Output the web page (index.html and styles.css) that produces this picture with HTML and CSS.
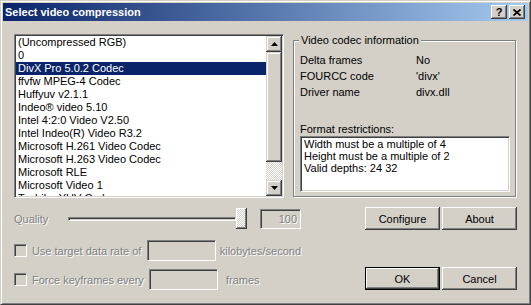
FILE: index.html
```html
<!DOCTYPE html>
<html lang="en">
  <head>
    <meta charset="UTF-8" />
    <title>Select video compression</title>
    <link rel="stylesheet" href="styles.css">
  </head>
  <body>
    <div class="window">
      <!-- Caption -->
      <div class="titlebar">
        <span class="title">Select video compression</span>
        <div class="caption-buttons">
          <span class="cap-btn help">?</span>
          <span class="cap-btn close">
            <svg width="8" height="7" viewBox="0 0 8 7">
              <path d="M0.5 0.5 L7.5 6.5 M7.5 0.5 L0.5 6.5" stroke="#000" stroke-width="1.7" fill="none" />
            </svg>
          </span>
        </div>
      </div>

      <div class="content">
        <div class="top">
          <!-- Codec list -->
          <div class="listbox">
            <ul class="items">
              <li>(Uncompressed RGB)</li>
              <li>0</li>
              <li class="selected">DivX Pro 5.0.2 Codec</li>
              <li>ffvfw MPEG-4 Codec</li>
              <li>Huffyuv v2.1.1</li>
              <li>Indeo® video 5.10</li>
              <li>Intel 4:2:0 Video V2.50</li>
              <li>Intel Indeo(R) Video R3.2</li>
              <li>Microsoft H.261 Video Codec</li>
              <li>Microsoft H.263 Video Codec</li>
              <li>Microsoft RLE</li>
              <li>Microsoft Video 1</li>
              <li>Toshiba YUV Codec</li>
            </ul>
            <div class="scrollbar">
              <div class="sb-btn">
                <svg width="7" height="4" viewBox="0 0 7 4"><polygon points="0,4 7,4 3.5,0" fill="#000" /></svg>
              </div>
              <div class="sb-thumb"></div>
              <div class="sb-track"></div>
              <div class="sb-btn">
                <svg width="7" height="4" viewBox="0 0 7 4"><polygon points="0,0 7,0 3.5,4" fill="#000" /></svg>
              </div>
            </div>
          </div>

          <!-- Codec info -->
          <div class="groupbox">
            <span class="legend">Video codec information</span>
            <div class="info">
              <span>Delta frames</span><span>No</span>
              <span>FOURCC code</span><span>'divx'</span>
              <span>Driver name</span><span>divx.dll</span>
            </div>
            <div class="restrict-label">Format restrictions:</div>
            <div class="restrict-box">
              <div>Width must be a multiple of 4</div>
              <div>Height must be a multiple of 2</div>
              <div>Valid depths: 24 32</div>
            </div>
          </div>
        </div>

        <div class="bottom">
          <div class="options">
            <div class="quality-row">
              <span class="disabled q-label">Quality</span>
              <div class="slider">
                <div class="slider-track"></div>
                <div class="slider-thumb"></div>
              </div>
              <div class="edit quality-edit disabled">100</div>
            </div>
            <div class="check-row">
              <span class="checkbox"></span>
              <span class="disabled check-label">Use target data rate of</span>
              <div class="edit"></div>
              <span class="disabled unit">kilobytes/second</span>
            </div>
            <div class="check-row second">
              <span class="checkbox"></span>
              <span class="disabled check-label">Force keyframes every</span>
              <div class="edit"></div>
              <span class="disabled unit frames">frames</span>
            </div>
          </div>

          <div class="actions">
            <div class="btn-row">
              <button class="btn">Configure</button>
              <button class="btn">About</button>
            </div>
            <div class="btn-row">
              <button class="btn default">OK</button>
              <button class="btn">Cancel</button>
            </div>
          </div>
        </div>
      </div>
    </div>
  </body>
</html>
```

FILE: styles.css
```css
body {
  margin: 0;
  background: #d4d0c8;
  font-family: "Liberation Sans", Arial, sans-serif;
  font-size: 11px;
  color: #000;
}

.window {
  width: 531px;
  height: 305px;
  box-sizing: border-box;
  background: #d4d0c8;
  border: 1px solid;
  border-color: #d4d0c8 #404040 #404040 #d4d0c8;
  box-shadow: inset 1px 1px #fff, inset -1px -1px #808080;
  padding: 2px;
}

.titlebar {
  height: 18px;
  display: flex;
  align-items: center;
  justify-content: space-between;
  padding: 0 3px 0 2px;
  background: linear-gradient(to right, #0a246a, #a6caf0);
}

.title {
  color: #fff;
  font-weight: bold;
  font-size: 11px;
}

.caption-buttons {
  display: flex;
  gap: 2px;
}

.cap-btn {
  width: 16px;
  height: 14px;
  box-sizing: border-box;
  display: flex;
  align-items: center;
  justify-content: center;
  background: #d4d0c8;
  box-shadow: inset -1px -1px #404040, inset 1px 1px #fff, inset -2px -2px #808080;
}

.help {
  font-weight: bold;
  font-size: 11px;
  line-height: 14px;
}

.content {
  padding: 13px 11px 0;
}

.top {
  display: flex;
  align-items: flex-start;
  gap: 9px;
}

/* list box */
.listbox {
  width: 270px;
  height: 164px;
  box-sizing: border-box;
  display: flex;
  background: #fff;
  border: 1px solid;
  border-color: #808080 #fff #fff #808080;
  box-shadow: inset 1px 1px #404040, inset -1px -1px #d4d0c8;
  padding: 1px;
}

.items {
  flex: 1;
  list-style: none;
  margin: 0;
  padding: 0;
  overflow: hidden;
}

.items li {
  height: 13px;
  line-height: 13px;
  padding-left: 2px;
  white-space: nowrap;
}

.items .selected {
  background: #0a246a;
  color: #fff;
}

.scrollbar {
  width: 16px;
  display: flex;
  flex-direction: column;
}

.sb-btn,
.sb-thumb {
  background: #d4d0c8;
  box-shadow: inset -1px -1px #404040, inset 1px 1px #d4d0c8, inset -2px -2px #808080, inset 2px 2px #fff;
}

.sb-btn {
  height: 16px;
  display: flex;
  align-items: center;
  justify-content: center;
}

.sb-thumb {
  height: 110px;
}

.sb-track {
  flex: 1;
  background: repeating-conic-gradient(#d4d0c8 0 25%, #fff 0 50%) 0 0 / 2px 2px;
}

/* group box */
.groupbox {
  position: relative;
  width: 223px;
  height: 157px;
  margin-top: 6px;
  box-sizing: border-box;
  border: 1px solid #808080;
  box-shadow: inset 1px 1px #fff, 1px 1px #fff;
  padding: 11px 6px 0;
}

.legend {
  position: absolute;
  top: -7px;
  left: 5px;
  padding: 0 2px;
  line-height: 13px;
  background: #d4d0c8;
}

.info {
  display: grid;
  grid-template-columns: 116px 1fr;
  line-height: 16px;
}

.restrict-label {
  margin-top: 23px;
  line-height: 13px;
}

.restrict-box {
  width: 210px;
  height: 56px;
  box-sizing: border-box;
  background: #fff;
  border: 1px solid;
  border-color: #808080 #fff #fff #808080;
  box-shadow: inset 1px 1px #404040, inset -1px -1px #d4d0c8;
  padding: 1px 3px;
  line-height: 12px;
}

/* lower controls */
.bottom {
  display: flex;
  justify-content: space-between;
  margin-top: 9px;
}

.options {
  width: 287px;
}

.disabled {
  color: #808080;
  text-shadow: 1px 1px #fff;
}

.quality-row {
  display: flex;
  align-items: center;
  height: 23px;
}

.q-label {
  width: 54px;
}

.slider {
  width: 179px;
  display: flex;
  align-items: center;
}

.slider-track {
  flex: 1;
  height: 4px;
  box-sizing: border-box;
  border: 1px solid;
  border-color: #808080 #fff #fff #808080;
  box-shadow: inset 1px 1px #404040;
  background: #d4d0c8;
}

.slider-thumb {
  width: 11px;
  height: 21px;
  box-shadow: inset -1px -1px #404040, inset 1px 1px #fff, inset -2px -2px #808080;
  background: repeating-conic-gradient(#d4d0c8 0 25%, #fff 0 50%) 0 0 / 2px 2px;
}

.edit {
  width: 69px;
  height: 21px;
  box-sizing: border-box;
  background: #d4d0c8;
  border: 1px solid;
  border-color: #808080 #fff #fff #808080;
  box-shadow: inset 1px 1px #404040, inset -1px -1px #d4d0c8;
}

.quality-edit {
  width: 41px;
  height: 20px;
  margin-left: 13px;
  text-align: right;
  line-height: 18px;
  padding-right: 3px;
}

.check-row {
  display: flex;
  align-items: center;
  height: 21px;
  margin-top: 10px;
}

.check-row.second {
  margin-top: 8px;
}

.checkbox {
  width: 13px;
  height: 13px;
  box-sizing: border-box;
  border: 1px solid;
  border-color: #808080 #fff #fff #808080;
  box-shadow: inset 1px 1px #404040, inset -1px -1px #d4d0c8;
  background: #d4d0c8;
}

.check-label {
  width: 117px;
  margin-left: 5px;
  white-space: nowrap;
}

.unit {
  margin-left: 4px;
}

.unit.frames {
  margin-left: 8px;
}

.actions {
  width: 152px;
  height: 83px;
  display: flex;
  flex-direction: column;
  justify-content: space-between;
}

.btn-row {
  display: flex;
  gap: 2px;
}

.btn {
  width: 75px;
  height: 23px;
  margin: 0;
  padding: 0;
  border: none;
  font-family: inherit;
  font-size: 11px;
  color: #000;
  background: #d4d0c8;
  box-shadow: inset -1px -1px #404040, inset 1px 1px #fff, inset -2px -2px #808080, inset 2px 2px #d4d0c8;
}

.btn.default {
  border: 1px solid #000;
  box-shadow: inset -1px -1px #404040, inset 1px 1px #fff, inset -2px -2px #808080;
}
```
